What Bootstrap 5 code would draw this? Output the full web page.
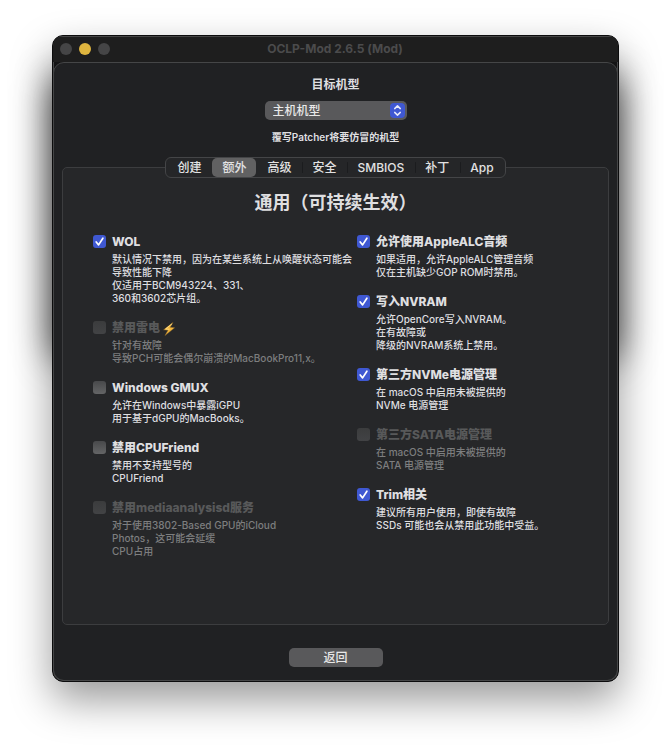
<!DOCTYPE html>
<html lang="zh-CN">
<head>
<meta charset="utf-8">
<meta name="viewport" content="width=device-width, initial-scale=1">
<title>OCLP-Mod 2.6.5 (Mod)</title>
<link href="https://cdn.jsdelivr.net/npm/bootstrap@5.3.0/dist/css/bootstrap.min.css" rel="stylesheet">
<style>
body { background: #fff; color: #dfdfe0; font-family: Inter, "Noto Sans CJK SC", sans-serif; font-size: 12px; line-height: 18px; }
.stage { padding: 35px 52px 69px; }
.frame { isolation: isolate; border-radius: 11px; box-shadow: 0 18px 40px rgba(0,0,0,.4); }
.frame::before { content: ""; position: absolute; z-index: -1; inset: 45px 0 50%; border-radius: 11px; box-shadow: 0 0 36px rgba(0,0,0,.72); }
.win { background: #141415; border: 1px solid #0c0c0d; border-radius: 11px; box-shadow: inset 0 0 0 1px #48494a; overflow: hidden; min-height: 646px; }
.titlebar { height: 26px; padding: 0 8px 2px 7px; background: #1e1e1e; border-top: 1px solid #464646; color: #4b4b4c; }
.dot { width: 12px; height: 12px; border-radius: 50%; background: #454546; border: 0; padding: 0; }
.dot-min { background: #dfb53f; }
.side { width: 50px; gap: 7px; }
.content { background: #202123; border: 1px solid #454647; border-radius: 11px; padding: 13px 8px 13px; }
.picker-label { margin-bottom: 7px; }
.picker { width: 142px; }
.picker-select { height: 19px; padding: 0 24px 0 8px; border: 0; border-radius: 5px; background: #59595b; color: #e8e8e8; font-size: 12px; line-height: 19px; font-weight: 500; appearance: none; }
.picker-knob { position: absolute; right: 2px; top: 2px; width: 15px; height: 15px; border-radius: 4px; background: #3f58d2; pointer-events: none; }
.hint { font-size: 10px; font-weight: 600; line-height: 18px; margin-bottom: 11px; }
.tabs-bar { height: 21px; border: 1px solid #444547; border-radius: 6px; background: #252628; z-index: 1; gap: 1px; padding: 0 1px; }
.tab-btn { border: 0; background: transparent; color: #e2e2e2; font-size: 12px; line-height: 19px; padding: 0 10px; border-radius: 5px; font-weight: 500; }
.tab-btn.active { background: #616162; }
.tab-btn:not(.active) + .tab-btn:not(.active) { background: linear-gradient(#1b1c1e, #1b1c1e) left center / 1px 11px no-repeat; }
.panel { border: 1px solid #3c3d3f; border-radius: 5px; background: #262729; margin-top: -11px; padding: 21px 8px 0; min-height: 458px; }
.panel-title { font-size: 18px; line-height: 28px; font-weight: 700; }
.opt-grid { padding-left: 22px; }
.col-l { width: 264px; }
.opts { gap: 14px; }
.opt { gap: 6px; }
.box { appearance: none; width: 13px; height: 13px; margin: 2px 0 0; border-radius: 3px; flex: none; background: linear-gradient(#48494b, #646566); }
.box:checked { background: #3f58d2 url("data:image/svg+xml,%3Csvg xmlns='http://www.w3.org/2000/svg' viewBox='0 0 13 13'%3E%3Cpath d='M3.2 7l2.4 2.900 4.300-6.700' fill='none' stroke='%23fff' stroke-width='1.7' stroke-linecap='round' stroke-linejoin='round'/%3E%3C/svg%3E"); }
.box:disabled { background: linear-gradient(#3b3c3d, #424345); }
.opt-name { display: block; height: 18px; font-weight: 800; margin-bottom: 2px; }
.opt-text { font-size: 10px; line-height: 13px; font-weight: 500; margin: 0; white-space: nowrap; }
.off .opt-name { color: #58595a; }
.off .opt-text { color: #7d7e7f; }
.back { width: 94px; height: 19px; border: 0; border-radius: 5px; background: #59595b; color: #e8e8e8; line-height: 19px; font-weight: 500; margin-top: 23px; padding: 0; }
</style>
<script src="https://cdn.jsdelivr.net/npm/bootstrap@5.3.0/dist/js/bootstrap.bundle.min.js"></script>
</head>
<body>
<div class="stage">
<div class="frame position-relative">
<main class="win d-flex flex-column">
  <header class="titlebar d-flex align-items-center justify-content-between">
    <div class="side d-flex">
      <button type="button" class="dot" aria-label="关闭"></button>
      <button type="button" class="dot dot-min" aria-label="最小化"></button>
      <button type="button" class="dot" aria-label="缩放"></button>
    </div>
    <span class="fw-bold">OCLP-Mod 2.6.5 (Mod)</span>
    <div class="side"></div>
  </header>
  <div class="content d-flex flex-column flex-grow-1 align-items-center">
    <label class="picker-label fw-bold" for="model">目标机型</label>
    <div class="picker position-relative mb-2">
      <select id="model" class="picker-select w-100 d-block"><option>主机机型</option></select>
      <svg class="picker-knob" viewBox="0 0 15 15" fill="none" stroke="#e6e9fb" stroke-width="1.5" stroke-linecap="round" stroke-linejoin="round" aria-hidden="true"><path d="M4.7 5.6 7.5 2.9l2.8 2.7M4.7 9.4l2.8 2.7 2.8-2.7"/></svg>
    </div>
    <div class="hint">覆写Patcher将要仿冒的机型</div>
    <div class="tabs-bar d-flex position-relative" role="tablist">
      <button type="button" role="tab" class="tab-btn">创建</button>
      <button type="button" role="tab" class="tab-btn active" aria-selected="true">额外</button>
      <button type="button" role="tab" class="tab-btn">高级</button>
      <button type="button" role="tab" class="tab-btn">安全</button>
      <button type="button" role="tab" class="tab-btn">SMBIOS</button>
      <button type="button" role="tab" class="tab-btn">补丁</button>
      <button type="button" role="tab" class="tab-btn">App</button>
    </div>
    <section class="panel w-100">
      <h1 class="panel-title text-center mb-3">通用（可持续生效）</h1>
      <div class="opt-grid d-flex">
        <div class="col-l opts d-flex flex-column">
          <div class="opt d-flex"><input class="box" type="checkbox" id="wol" checked><div><label class="opt-name" for="wol">WOL</label><p class="opt-text">默认情况下禁用，因为在某些系统上从唤醒状态可能会<br>导致性能下降<br>仅适用于BCM943224、331、<br>360和3602芯片组。</p></div></div>
          <div class="opt off d-flex"><input class="box" type="checkbox" id="tb" disabled><div><label class="opt-name" for="tb">禁用雷电 <svg width="12" height="14" viewBox="0 0 12 14" aria-hidden="true"><path d="M10 .5.600 7.800l4.400.4L2 13.600 11.600 5.800l-4.400-.5z" fill="#f3b63c" stroke="#8f6a2c" stroke-width=".5"/><path d="M9 1.800 2.600 6.900l3.800.4" fill="none" stroke="#ffe08a" stroke-width=".9"/></svg></label><p class="opt-text">针对有故障<br>导致PCH可能会偶尔崩溃的MacBookPro11,x。</p></div></div>
          <div class="opt d-flex"><input class="box" type="checkbox" id="gmux"><div><label class="opt-name" for="gmux">Windows GMUX</label><p class="opt-text">允许在Windows中暴露iGPU<br>用于基于dGPU的MacBooks。</p></div></div>
          <div class="opt d-flex"><input class="box" type="checkbox" id="cpuf"><div><label class="opt-name" for="cpuf">禁用CPUFriend</label><p class="opt-text">禁用不支持型号的<br>CPUFriend</p></div></div>
          <div class="opt off d-flex"><input class="box" type="checkbox" id="media" disabled><div><label class="opt-name" for="media">禁用mediaanalysisd服务</label><p class="opt-text">对于使用3802-Based GPU的iCloud<br>Photos，这可能会延缓<br>CPU占用</p></div></div>
        </div>
        <div class="opts d-flex flex-column">
          <div class="opt d-flex"><input class="box" type="checkbox" id="alc" checked><div><label class="opt-name" for="alc">允许使用AppleALC音频</label><p class="opt-text">如果适用，允许AppleALC管理音频<br>仅在主机缺少GOP ROM时禁用。</p></div></div>
          <div class="opt d-flex"><input class="box" type="checkbox" id="nvram" checked><div><label class="opt-name" for="nvram">写入NVRAM</label><p class="opt-text">允许OpenCore写入NVRAM。<br>在有故障或<br>降级的NVRAM系统上禁用。</p></div></div>
          <div class="opt d-flex"><input class="box" type="checkbox" id="nvme" checked><div><label class="opt-name" for="nvme">第三方NVMe电源管理</label><p class="opt-text">在 macOS 中启用未被提供的<br>NVMe 电源管理</p></div></div>
          <div class="opt off d-flex"><input class="box" type="checkbox" id="sata" disabled><div><label class="opt-name" for="sata">第三方SATA电源管理</label><p class="opt-text">在 macOS 中启用未被提供的<br>SATA 电源管理</p></div></div>
          <div class="opt d-flex"><input class="box" type="checkbox" id="trim" checked><div><label class="opt-name" for="trim">Trim相关</label><p class="opt-text">建议所有用户使用，即使有故障<br>SSDs 可能也会从禁用此功能中受益。</p></div></div>
        </div>
      </div>
    </section>
    <button type="button" class="back">返回</button>
  </div>
</main>
</div>
</div>
</body>
</html>
